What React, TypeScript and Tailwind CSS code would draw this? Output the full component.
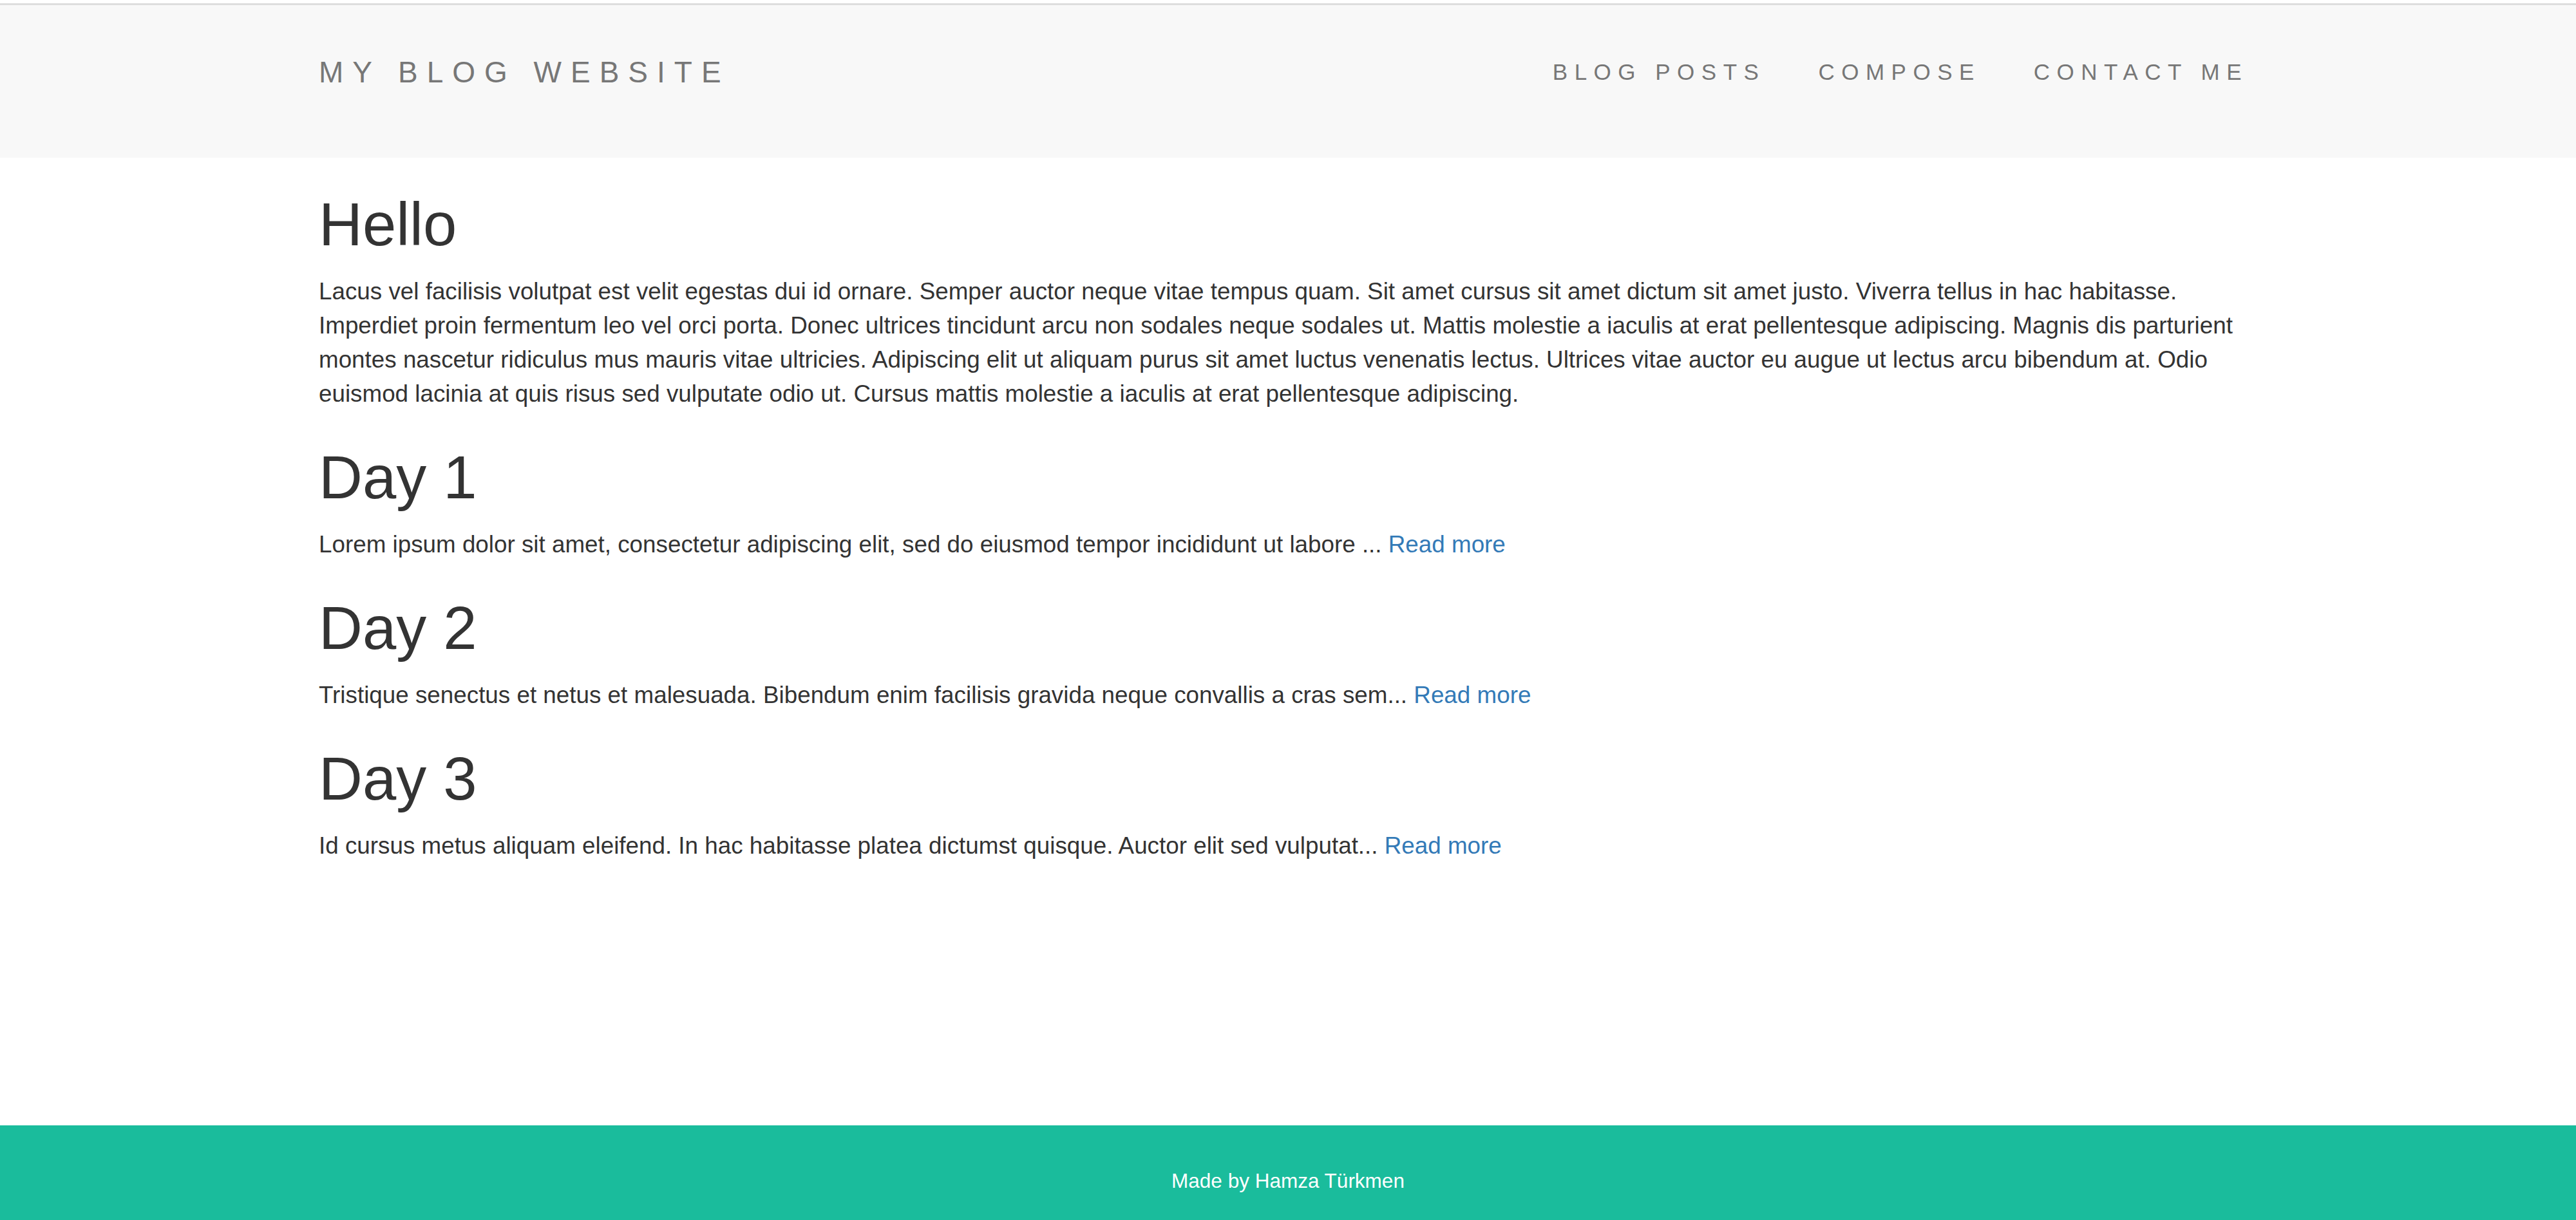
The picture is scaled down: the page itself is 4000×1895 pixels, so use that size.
const posts = [
  {
    title: "Day 1",
    excerpt:
      "Lorem ipsum dolor sit amet, consectetur adipiscing elit, sed do eiusmod tempor incididunt ut labore ...",
  },
  {
    title: "Day 2",
    excerpt:
      "Tristique senectus et netus et malesuada. Bibendum enim facilisis gravida neque convallis a cras sem...",
  },
  {
    title: "Day 3",
    excerpt:
      "Id cursus metus aliquam eleifend. In hac habitasse platea dictumst quisque. Auctor elit sed vulputat...",
  },
];

const intro =
  "Lacus vel facilisis volutpat est velit egestas dui id ornare. Semper auctor neque vitae tempus quam. Sit amet cursus sit amet dictum sit amet justo. Viverra tellus in hac habitasse. Imperdiet proin fermentum leo vel orci porta. Donec ultrices tincidunt arcu non sodales neque sodales ut. Mattis molestie a iaculis at erat pellentesque adipiscing. Magnis dis parturient montes nascetur ridiculus mus mauris vitae ultricies. Adipiscing elit ut aliquam purus sit amet luctus venenatis lectus. Ultrices vitae auctor eu augue ut lectus arcu bibendum at. Odio euismod lacinia at quis risus sed vulputate odio ut. Cursus mattis molestie a iaculis at erat pellentesque adipiscing.";

function Navbar() {
  return (
    <div className="pt-[5px] bg-white">
      <nav className="h-[240px] border-t-[3px] border-[#dedede] bg-[#f8f8f8] pt-[81px]">
        <div className="mx-auto flex w-[3010px] items-center justify-between">
          <a className="text-[46px] leading-[46px] tracking-[14px] text-[#777]">
            MY BLOG WEBSITE
          </a>
          <ul className="flex gap-[82px] pr-[14px] text-[35px] leading-[46px] tracking-[10.5px] text-[#777]">
            <li>BLOG POSTS</li>
            <li>COMPOSE</li>
            <li>CONTACT ME</li>
          </ul>
        </div>
      </nav>
    </div>
  );
}

function Post({ title, excerpt }: { title: string; excerpt: string }) {
  return (
    <>
      <h1 className="mt-[52px] mb-[26px] text-[94px] leading-[103px]">{title}</h1>
      <p className="mb-[26px]">
        {excerpt} <a className="text-[#337ab7]">Read more</a>
      </p>
    </>
  );
}

export default function App() {
  return (
    <div className="flex min-h-screen flex-col bg-white font-['Liberation_Sans',Arial,sans-serif] text-[#333]">
      <Navbar />
      <main className="mx-auto w-[3010px] text-[36.8px] leading-[53px]">
        <h1 className="mt-[52px] mb-[26px] text-[94px] leading-[103px]">Hello</h1>
        <p className="mb-[26px]">{intro}</p>
        {posts.map((p) => (
          <Post key={p.title} title={p.title} excerpt={p.excerpt} />
        ))}
      </main>
      <footer className="mt-auto bg-[#1abc9c] pt-[64px] pb-[39px] text-center text-[31.5px] leading-[44px] text-white">
        Made by Hamza Türkmen
      </footer>
    </div>
  );
}
